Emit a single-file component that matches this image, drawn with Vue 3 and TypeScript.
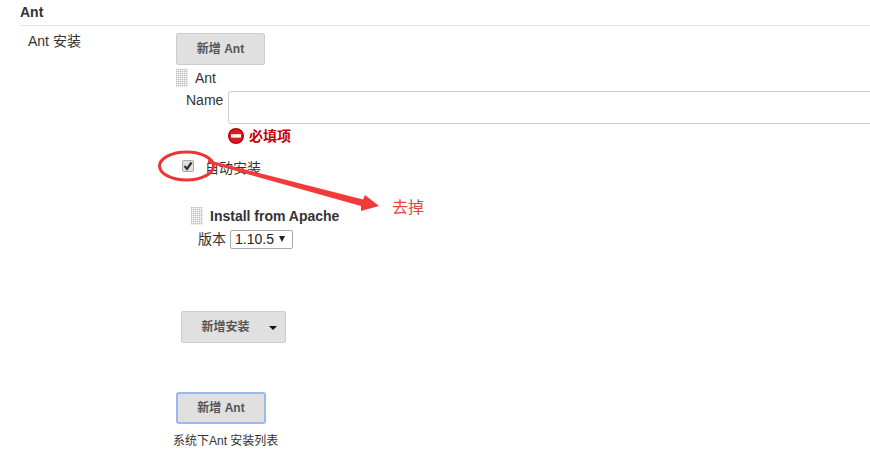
<script setup lang="ts">
const dots: number[] = [0, 2, 4, 6, 8, 10];
const rows: number[] = [0, 2, 4, 6, 8, 10, 12, 14, 16];
</script>

<template>
  <div class="page">
    <div class="section-head">Ant</div>
    <div class="row">
      <div class="label">Ant 安装</div>
      <div class="body">
        <button class="btn add-top" type="button">新增 Ant</button>
        <div class="tool-head">
          <svg class="handle" width="12" height="18" viewBox="0 0 12 18">
            <template v-for="y in rows" :key="y">
              <rect v-for="x in dots" :key="x" :x="x" :y="y" width="1.4" height="1.4" fill="#bbb" />
            </template>
          </svg>
          <span>Ant</span>
        </div>
        <div class="name-row">
          <label class="name-label">Name</label>
          <input class="name-input" type="text" />
        </div>
        <div class="error">
          <svg width="16" height="16" viewBox="0 0 16 16">
            <circle cx="8" cy="8" r="8" fill="#b8000a" />
            <circle cx="8" cy="8" r="6.6" fill="#dd1a1f" />
            <rect x="3" y="6.2" width="10" height="3.4" fill="#fff" />
          </svg>
          <span>必填项</span>
        </div>
        <div class="auto">
          <span class="check">
            <svg width="10" height="10" viewBox="0 0 10 10">
              <path d="M1.5 5 L4 8 L8.5 1.5" fill="none" stroke="#333" stroke-width="2.2" />
            </svg>
          </span>
          <span>自动安装</span>
        </div>
        <div class="installer">
          <div class="installer-head">
            <svg class="handle" width="12" height="18" viewBox="0 0 12 18">
              <template v-for="y in rows" :key="y">
                <rect v-for="x in dots" :key="x" :x="x" :y="y" width="1.4" height="1.4" fill="#bbb" />
              </template>
            </svg>
            <strong>Install from Apache</strong>
          </div>
          <div class="version">
            <span>版本</span>
            <div class="select">1.10.5<i class="select-arrow"></i></div>
          </div>
        </div>
        <button class="btn add-installer" type="button">新增安装<i class="caret"></i></button>
        <button class="btn add-bottom" type="button">新增 Ant</button>
        <div class="hint">系统下Ant 安装列表</div>
      </div>
    </div>

    <svg class="annotation" width="870" height="454" viewBox="0 0 870 454">
      <ellipse cx="186.5" cy="166" rx="27" ry="14" fill="none" stroke="#ee3535" stroke-width="3" />
      <polygon points="208,160 363,199.5 365,195 379,206 361,211 361,206 208,163" fill="#f23a3a" />
      <text x="392" y="213" class="note">去掉</text>
    </svg>
  </div>
</template>

<style>
html, body { margin: 0; background: #fff; }
</style>

<style scoped>
.page {
  position: relative;
  width: 870px;
  height: 454px;
  overflow: hidden;
  background: #fff;
  color: #333;
  font: 14px/20px Arial, "Liberation Sans", "Noto Sans CJK SC", sans-serif;
}
.section-head {
  height: 25px;
  margin-left: 20px;
  border-bottom: 1px solid #e3e3e3;
  font-weight: 700;
  font-size: 14px;
  line-height: 25px;
}
.row { display: flex; }
.label {
  flex: none;
  width: 148px;
  padding-left: 28px;
  padding-top: 5px;
}
.body { display: flex; flex-direction: column; align-items: flex-start; flex: 1; min-width: 0; }
.btn {
  display: block;
  box-sizing: border-box;
  height: 32px;
  padding: 0;
  border: 1px solid #ccc;
  border-radius: 2px;
  background: #e0e0e0;
  color: #555;
  font: 700 12px/18px Arial, "Liberation Sans", "Noto Sans CJK SC", sans-serif;
}
.add-top { width: 89px; margin-top: 7px; }
.tool-head {
  display: flex;
  align-items: center;
  height: 18px;
  margin-top: 4px;
}
.tool-head span { margin-left: 7px; }
.name-row { display: flex; margin-top: 4px; margin-left: 10px; }
.name-label { flex: none; width: 42px; margin-top: -1px; }
.name-input {
  box-sizing: border-box;
  width: 660px;
  flex: none;
  height: 33px;
  border: 1px solid #ccc;
  border-radius: 3px;
  background: #fff;
  outline: none;
}
.error {
  display: flex;
  align-items: center;
  gap: 5px;
  height: 20px;
  margin-top: 2px;
  margin-left: 52px;
  color: #c4000a;
  font-weight: 700;
}
.auto {
  display: flex;
  align-items: flex-start;
  height: 20px;
  margin-top: 12px;
  margin-left: 6px;
}
.check {
  box-sizing: border-box;
  display: flex;
  align-items: center;
  justify-content: center;
  width: 12px;
  height: 12px;
  margin: 2px 11px 0 0;
  border: 1px solid #aaa;
  border-radius: 2px;
  background: #e0e0e0;
}
.installer { margin-top: 29px; margin-left: 15px; }
.installer-head { display: flex; align-items: center; height: 18px; }
.installer-head strong { margin-left: 7px; }
.version {
  display: flex;
  align-items: center;
  height: 20px;
  margin-top: 4px;
  margin-left: 7px;
}
.select {
  box-sizing: border-box;
  display: flex;
  align-items: center;
  width: 63px;
  height: 19px;
  margin-left: 4px;
  padding-left: 4px;
  border: 1px solid #aaa;
  border-radius: 2px;
  color: #222;
}
.select-arrow {
  margin-left: 5px;
  border-left: 3.5px solid transparent;
  border-right: 3.5px solid transparent;
  border-top: 6px solid #222;
}
.add-installer {
  position: relative;
  width: 105px;
  margin-top: 62px;
  margin-left: 5px;
  padding-right: 16px;
}
.caret {
  position: absolute;
  right: 8px;
  top: 14px;
  border-left: 4px solid transparent;
  border-right: 4px solid transparent;
  border-top: 4px solid #111;
}
.add-bottom {
  width: 90px;
  margin-top: 49px;
  border: 2px solid #9db8ec;
  border-radius: 3px;
}
.hint { margin-top: 7px; margin-left: -3px; font-size: 12px; line-height: 20px; }
.annotation { position: absolute; left: 0; top: 0; pointer-events: none; }
.note { fill: #ee4040; font-size: 16px; font-family: "Noto Sans CJK SC", sans-serif; }
</style>
